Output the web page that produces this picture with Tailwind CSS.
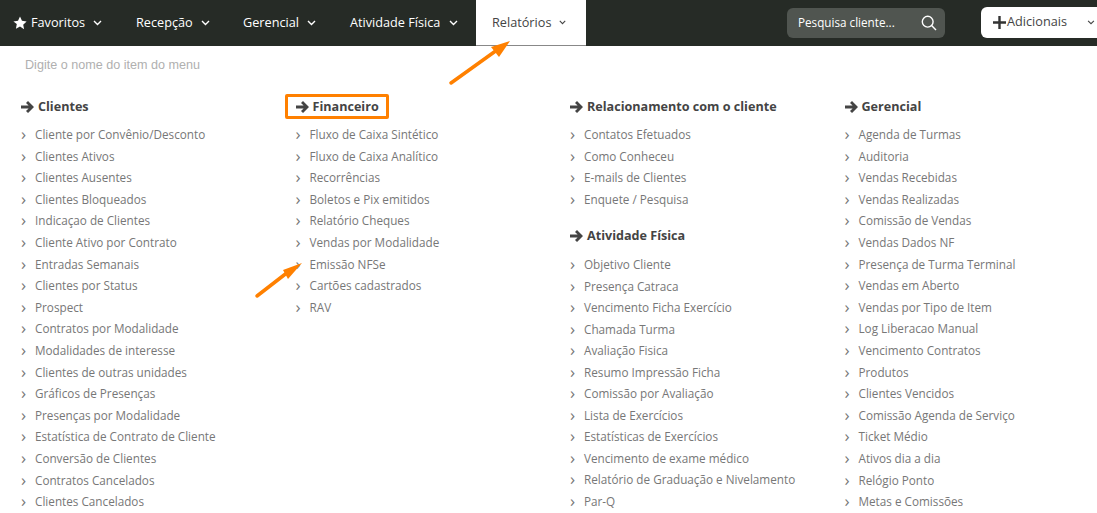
<!DOCTYPE html>
<html lang="pt"><head><meta charset="utf-8"><script src="https://cdn.jsdelivr.net/npm/@tailwindcss/browser@4"></script></head>
<body class="bg-white overflow-hidden font-['Open_Sans',sans-serif]">
<div class="relative w-[1097px] h-[513px] overflow-hidden">
<nav class="h-[46px] bg-[#262b26] flex items-center text-white text-[12.7px] whitespace-nowrap">
  <a class="flex shrink-0 items-center ml-[13px] w-[123px]"><svg class="w-[14px] h-[14px] mr-[4px]" viewBox="0 0 24 24" fill="#fff"><path d="M12 1l3.4 7.3 7.9 1-5.8 5.5 1.5 7.9L12 17.9l-7 3.8 1.5-7.9L.7 9.3l7.9-1z"/></svg>Favoritos<svg class="w-[9px] h-[6px] ml-[8px]" viewBox="0 0 9 6" fill="none" stroke="#fff" stroke-width="1.4"><path d="M1 1l3.5 3.5L8 1"/></svg></a>
  <a class="flex shrink-0 items-center w-[107px]">Recepção<svg class="w-[9px] h-[6px] ml-[8px]" viewBox="0 0 9 6" fill="none" stroke="#fff" stroke-width="1.4"><path d="M1 1l3.5 3.5L8 1"/></svg></a>
  <a class="flex shrink-0 items-center w-[107px]">Gerencial<svg class="w-[9px] h-[6px] ml-[8px]" viewBox="0 0 9 6" fill="none" stroke="#fff" stroke-width="1.4"><path d="M1 1l3.5 3.5L8 1"/></svg></a>
  <a class="flex shrink-0 items-center w-[126px]">Atividade Física<svg class="w-[9px] h-[6px] ml-[9px]" viewBox="0 0 9 6" fill="none" stroke="#fff" stroke-width="1.4"><path d="M1 1l3.5 3.5L8 1"/></svg></a>
  <a class="flex shrink-0 items-center h-[46px] w-[110px] pl-[16px] bg-white text-[#444] border-b border-[#888]">Relatórios<svg class="w-[7px] h-[5px] ml-[8px]" viewBox="0 0 9 6" fill="none" stroke="#444" stroke-width="1.4"><path d="M1 1l3.5 3.5L8 1"/></svg></a>
  <div class="shrink-0 ml-[201px] mb-[1px] w-[158px] h-[30px] rounded-[6px] bg-[#505550] flex items-center pl-[11px] pr-[8px] text-[11.7px] justify-between">Pesquisa cliente...<svg class="w-[16px] h-[16px]" viewBox="0 0 16 16" fill="none" stroke="#fff" stroke-width="1.4"><circle cx="6.7" cy="6.7" r="5.4"/><path d="M10.6 10.6L15 15"/></svg></div>
  <div class="ml-[36px] mb-[1px] w-[130px] h-[31px] shrink-0 rounded-[6px] bg-white text-[#444] flex items-center pl-[12px]"><svg class="w-[13px] h-[13px] mr-[1px]" viewBox="0 0 13 13" fill="#333"><path d="M5.3 0h2.4v5.3H13v2.4H7.7V13H5.3V7.7H0V5.3h5.3z"/></svg><span class="mb-[2px]">Adicionais</span><svg class="w-[8px] h-[5px] ml-[20px]" viewBox="0 0 9 6" fill="none" stroke="#444" stroke-width="1.3"><path d="M1 1l3.5 3.5L8 1"/></svg></div>
</nav>
<div class="pl-[25px] pt-[11px] h-[46px] text-[12.6px] font-['Liberation_Sans',sans-serif] text-[#b0b0b0] leading-[16px]">Digite o nome do item do menu</div>
<div class="grid grid-cols-[274.5px_274.5px_274.5px_1fr] pl-[21px] pt-[6px] text-[11.72px] text-[#777]">
  <section>
    <h3 class="flex items-center h-[18px] text-[12.6px] font-bold text-[#444]"><svg class="w-[13px] h-[12px] mr-[4px]" viewBox="0 0 13 12" fill="#444"><path d="M7 0l6 6-6 6-2-2 2.6-2.4H0V4.4h7.6L5 2z"/></svg>Clientes</h3>
    <ul class="mt-[8px] [&>li]:h-[21.6px] [&>li]:leading-[21.6px] [&>li]:pl-[14px] [&>li]:relative [&>li]:before:content-['›'] [&>li]:before:absolute [&>li]:before:left-0 [&>li]:before:text-[17px] [&>li]:before:top-[-1px]">
      <li>Cliente por Convênio/Desconto</li><li>Clientes Ativos</li><li>Clientes Ausentes</li><li>Clientes Bloqueados</li><li>Indicaçao de Clientes</li><li>Cliente Ativo por Contrato</li><li>Entradas Semanais</li><li>Clientes por Status</li><li>Prospect</li><li>Contratos por Modalidade</li><li>Modalidades de interesse</li><li>Clientes de outras unidades</li><li>Gráficos de Presenças</li><li>Presenças por Modalidade</li><li>Estatística de Contrato de Cliente</li><li>Conversão de Clientes</li><li>Contratos Cancelados</li><li>Clientes Cancelados</li>
    </ul>
  </section>
  <section>
    <h3 class="flex items-center h-[18px] text-[12.6px] font-bold text-[#444]"><svg class="w-[13px] h-[12px] mr-[4px]" viewBox="0 0 13 12" fill="#444"><path d="M7 0l6 6-6 6-2-2 2.6-2.4H0V4.4h7.6L5 2z"/></svg>Financeiro</h3>
    <ul class="mt-[8px] [&>li]:h-[21.6px] [&>li]:leading-[21.6px] [&>li]:pl-[14px] [&>li]:relative [&>li]:before:content-['›'] [&>li]:before:absolute [&>li]:before:left-0 [&>li]:before:text-[17px] [&>li]:before:top-[-1px]">
      <li>Fluxo de Caixa Sintético</li><li>Fluxo de Caixa Analítico</li><li>Recorrências</li><li>Boletos e Pix emitidos</li><li>Relatório Cheques</li><li>Vendas por Modalidade</li><li>Emissão NFSe</li><li>Cartões cadastrados</li><li>RAV</li>
    </ul>
  </section>
  <section>
    <h3 class="flex items-center h-[18px] text-[12.6px] font-bold text-[#444]"><svg class="w-[13px] h-[12px] mr-[4px]" viewBox="0 0 13 12" fill="#444"><path d="M7 0l6 6-6 6-2-2 2.6-2.4H0V4.4h7.6L5 2z"/></svg>Relacionamento com o cliente</h3>
    <ul class="mt-[8px] [&>li]:h-[21.6px] [&>li]:leading-[21.6px] [&>li]:pl-[14px] [&>li]:relative [&>li]:before:content-['›'] [&>li]:before:absolute [&>li]:before:left-0 [&>li]:before:text-[17px] [&>li]:before:top-[-1px]">
      <li>Contatos Efetuados</li><li>Como Conheceu</li><li>E-mails de Clientes</li><li>Enquete / Pesquisa</li>
    </ul>
    <h3 class="flex items-center h-[18px] mt-[17px] text-[12.6px] font-bold text-[#444]"><svg class="w-[13px] h-[12px] mr-[4px]" viewBox="0 0 13 12" fill="#444"><path d="M7 0l6 6-6 6-2-2 2.6-2.4H0V4.4h7.6L5 2z"/></svg>Atividade Física</h3>
    <ul class="mt-[8.6px] [&>li]:h-[21.55px] [&>li]:leading-[21.55px] [&>li]:pl-[14px] [&>li]:relative [&>li]:before:content-['›'] [&>li]:before:absolute [&>li]:before:left-0 [&>li]:before:text-[17px] [&>li]:before:top-[-1px]">
      <li>Objetivo Cliente</li><li>Presença Catraca</li><li>Vencimento Ficha Exercício</li><li>Chamada Turma</li><li>Avaliação Fisica</li><li>Resumo Impressão Ficha</li><li>Comissão por Avaliação</li><li>Lista de Exercícios</li><li>Estatísticas de Exercícios</li><li>Vencimento de exame médico</li><li>Relatório de Graduação e Nivelamento</li><li>Par-Q</li>
    </ul>
  </section>
  <section>
    <h3 class="flex items-center h-[18px] text-[12.6px] font-bold text-[#444]"><svg class="w-[13px] h-[12px] mr-[4px]" viewBox="0 0 13 12" fill="#444"><path d="M7 0l6 6-6 6-2-2 2.6-2.4H0V4.4h7.6L5 2z"/></svg>Gerencial</h3>
    <ul class="mt-[8px] [&>li]:h-[21.6px] [&>li]:leading-[21.6px] [&>li]:pl-[14px] [&>li]:relative [&>li]:before:content-['›'] [&>li]:before:absolute [&>li]:before:left-0 [&>li]:before:text-[17px] [&>li]:before:top-[-1px]">
      <li>Agenda de Turmas</li><li>Auditoria</li><li>Vendas Recebidas</li><li>Vendas Realizadas</li><li>Comissão de Vendas</li><li>Vendas Dados NF</li><li>Presença de Turma Terminal</li><li>Vendas em Aberto</li><li>Vendas por Tipo de Item</li><li>Log Liberacao Manual</li><li>Vencimento Contratos</li><li>Produtos</li><li>Clientes Vencidos</li><li>Comissão Agenda de Serviço</li><li>Ticket Médio</li><li>Ativos dia a dia</li><li>Relógio Ponto</li><li>Metas e Comissões</li>
    </ul>
  </section>
</div>
<div class="absolute left-[285px] top-[94px] w-[104px] h-[25px] rounded-[2px] border-[3px] border-[#ff8000]"></div>
<svg class="absolute inset-0 pointer-events-none" width="1097" height="513" fill="#ff8000" stroke="none"><path d="M451 83L497 50" stroke="#ff8000" stroke-width="3.5" stroke-linecap="round"/><path d="M510 41L499 57L491 47z"/><path d="M257 296L288 272" stroke="#ff8000" stroke-width="3.5" stroke-linecap="round"/><path d="M302 263L288 279L283 270z"/></svg>
</div>
</body></html>
